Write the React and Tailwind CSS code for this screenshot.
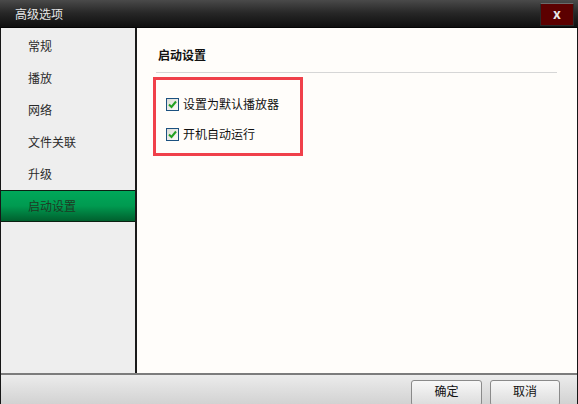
import React from 'react';

const FONT = { fontFamily: '"Noto Sans CJK SC", "DejaVu Sans", sans-serif' };

const navItems = ['常规', '播放', '网络', '文件关联', '升级', '启动设置'];

const Check = ({ label }) => (
  <label className="flex items-center gap-[4px] h-[14px]">
    <span className="w-[13px] h-[13px] border border-[#1c5180] bg-gradient-to-br from-[#dcdcd6] to-[#fbfbf8] flex items-center justify-center">
      <svg width="9" height="9" viewBox="0 0 9 9">
        <path d="M1 4.5 L3.5 7 L8 1.5" fill="none" stroke="#21a121" strokeWidth="2" />
      </svg>
    </span>
    <span className="text-[12px] leading-none text-[#111]">{label}</span>
  </label>
);

export default function App() {
  const active = '启动设置';
  return (
    <div className="w-[578px] h-[404px] flex flex-col overflow-hidden bg-[#161616]" style={FONT}>
      {/* title bar */}
      <div className="h-[28px] shrink-0 flex items-center justify-between bg-gradient-to-b from-[#4a4a4a] via-[#262626] to-[#101010] border-b border-[#050505]">
        <span className="pl-[15px] text-[12px] text-[#e6e6e6]">高级选项</span>
        <div className="mr-[4px] mt-[1px] w-[34px] h-[23px] bg-[#5c0000] border border-[#2a2a2a] border-t-[#6a6a6a] flex items-center justify-center text-[#e8e8e8] text-[14px] font-bold leading-none pb-[2px]">
          x
        </div>
      </div>

      {/* body */}
      <div className="flex flex-1 mx-[1px]">
        <div className="w-[136px] bg-[#eeeeee] border-r-2 border-[#1a1a1a] pt-[2px]">
          {navItems.map((item) =>
            item === active ? (
              <div
                key={item}
                className="h-[32px] flex items-center pl-[27px] text-[12px] text-[#1f3a24] border-y border-[#0b2012] bg-gradient-to-b from-[#00a85a] via-[#009a50] to-[#00602e]"
              >
                {item}
              </div>
            ) : (
              <div key={item} className="h-[32px] flex items-center pl-[27px] text-[12px] text-[#2a2a2a]">
                {item}
              </div>
            )
          )}
        </div>

        <div className="flex-1 bg-[#fffdfa] pl-[16px] pr-[20px] pt-[21px]">
          <div className="text-[12px] font-bold text-[#111] leading-none pl-[5px]">启动设置</div>
          <div className="mt-[11px] ml-[3px] h-[1px] bg-[#d6d6d6]" />
          <div className="mt-[4px] w-[150px] h-[79px] border-[3px] border-[#f0404a] pl-[10px] pt-[17px] flex flex-col gap-[16px]">
            <Check label="设置为默认播放器" />
            <Check label="开机自动运行" />
          </div>
        </div>
      </div>

      {/* footer */}
      <div className="h-[31px] shrink-0 border-t-2 border-[#7c7c7c] mx-[1px] bg-gradient-to-b from-[#ececec] to-[#d2d2d2] flex justify-end gap-[8px] pr-[17px] pt-[5px]">
        <button className="w-[71px] h-[26px] rounded-[3px] border border-[#8a8a8a] bg-gradient-to-b from-[#f8f8f8] to-[#dcdcdc] text-[12px] text-[#111] leading-none pb-[4px]">
          确定
        </button>
        <button className="w-[70px] h-[26px] rounded-[3px] border border-[#8a8a8a] bg-gradient-to-b from-[#f8f8f8] to-[#dcdcdc] text-[12px] text-[#111] leading-none pb-[4px]">
          取消
        </button>
      </div>
    </div>
  );
}
